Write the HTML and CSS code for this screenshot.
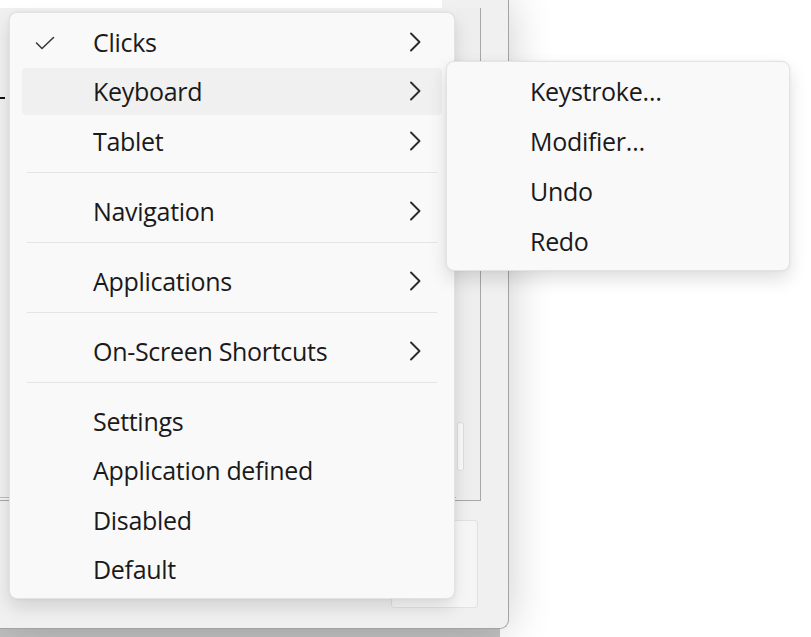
FILE: index.html
```html
<!DOCTYPE html>
<html lang="en">
<head>
<meta charset="utf-8">
<title>Context menu</title>
<link rel="stylesheet" href="styles.css">
</head>
<body>
<div class="desktop">
  <div class="app-window">
    <div class="topbar"></div>
    <div class="frame">
      <div class="tree"><div class="tick"></div></div>
      <div class="scroll"><div class="thumb"></div></div>
    </div>
    <div class="button-row"><div class="win-button"></div></div>
  </div>
  <div class="bottom-strip"></div>

  <div class="menu main-menu">
    <div class="item">
      <span class="icon-col">
        <svg class="check" width="20" height="14" viewBox="0 0 20 14"><polyline points="1.5,7 7,12.5 18.5,1.5" fill="none" stroke="#3a3a3a" stroke-width="1.6" stroke-linecap="round" stroke-linejoin="round"/></svg>
      </span>
      <span class="label">Clicks</span>
      <svg class="chev" width="12" height="20" viewBox="0 0 12 20"><polyline points="2,1.5 10.5,10 2,18.5" fill="none" stroke="#2b2b2b" stroke-width="1.9" stroke-linecap="round" stroke-linejoin="round"/></svg>
    </div>
    <div class="item active">
      <span class="icon-col"></span>
      <span class="label">Keyboard</span>
      <svg class="chev" width="12" height="20" viewBox="0 0 12 20"><polyline points="2,1.5 10.5,10 2,18.5" fill="none" stroke="#2b2b2b" stroke-width="1.9" stroke-linecap="round" stroke-linejoin="round"/></svg>
    </div>
    <div class="item">
      <span class="icon-col"></span>
      <span class="label">Tablet</span>
      <svg class="chev" width="12" height="20" viewBox="0 0 12 20"><polyline points="2,1.5 10.5,10 2,18.5" fill="none" stroke="#2b2b2b" stroke-width="1.9" stroke-linecap="round" stroke-linejoin="round"/></svg>
    </div>
    <div class="sep"></div>
    <div class="item">
      <span class="icon-col"></span>
      <span class="label">Navigation</span>
      <svg class="chev" width="12" height="20" viewBox="0 0 12 20"><polyline points="2,1.5 10.5,10 2,18.5" fill="none" stroke="#2b2b2b" stroke-width="1.9" stroke-linecap="round" stroke-linejoin="round"/></svg>
    </div>
    <div class="sep"></div>
    <div class="item">
      <span class="icon-col"></span>
      <span class="label">Applications</span>
      <svg class="chev" width="12" height="20" viewBox="0 0 12 20"><polyline points="2,1.5 10.5,10 2,18.5" fill="none" stroke="#2b2b2b" stroke-width="1.9" stroke-linecap="round" stroke-linejoin="round"/></svg>
    </div>
    <div class="sep"></div>
    <div class="item">
      <span class="icon-col"></span>
      <span class="label">On-Screen Shortcuts</span>
      <svg class="chev" width="12" height="20" viewBox="0 0 12 20"><polyline points="2,1.5 10.5,10 2,18.5" fill="none" stroke="#2b2b2b" stroke-width="1.9" stroke-linecap="round" stroke-linejoin="round"/></svg>
    </div>
    <div class="sep"></div>
    <div class="item"><span class="icon-col"></span><span class="label">Settings</span></div>
    <div class="item"><span class="icon-col"></span><span class="label">Application defined</span></div>
    <div class="item"><span class="icon-col"></span><span class="label">Disabled</span></div>
    <div class="item"><span class="icon-col"></span><span class="label">Default</span></div>
  </div>

  <div class="menu sub-menu">
    <div class="item"><span class="icon-col"></span><span class="label">Keystroke…</span></div>
    <div class="item"><span class="icon-col"></span><span class="label">Modifier…</span></div>
    <div class="item"><span class="icon-col"></span><span class="label">Undo</span></div>
    <div class="item"><span class="icon-col"></span><span class="label">Redo</span></div>
  </div>
</div>
</body>
</html>
```

FILE: styles.css
```css
* { box-sizing: border-box; }
html, body { margin: 0; padding: 0; }
body {
  width: 811px;
  height: 637px;
  overflow: hidden;
  background: #ffffff;
  font-family: "Open Sans", "Noto Sans", sans-serif;
}
.desktop {
  position: relative;
  width: 811px;
  height: 637px;
  overflow: hidden;
}

/* background application window */
.app-window {
  position: absolute;
  left: 0;
  top: 0;
  width: 509px;
  height: 629px;
  background: #f0f0f0;
  border-right: 1px solid #a3a3a3;
  border-bottom: 1px solid #a3a3a3;
  border-bottom-right-radius: 9px;
  box-shadow: 0 0 46px rgba(0, 0, 0, 0.20);
  display: flex;
  flex-direction: column;
  z-index: 2;
}
.topbar {
  width: 442px;
  height: 8px;
  background: #ffffff;
  flex: none;
}
.frame {
  width: 481px;
  height: 493px;
  border-right: 1px solid #a7a7a7;
  border-bottom: 1px solid #a7a7a7;
  display: flex;
  flex: none;
  box-shadow: inset -2px -2px 0 #f3f3f3, inset -3px -3px 0 #bdbdbd;
}
.tree {
  flex: 1;
  padding-top: 89px;
}
.tick {
  width: 5px;
  height: 2px;
  background: #111;
}
.scroll {
  width: 24px;
  display: flex;
  flex-direction: column;
  justify-content: flex-end;
  padding: 0 0 29px 1px;
  background: #eeeeee;
}
.thumb {
  width: 7px;
  height: 49px;
  background: #fbfbfb;
  border: 1px solid #dedede;
  border-radius: 3px;
}
.button-row {
  display: flex;
  justify-content: flex-end;
  padding: 19px 30px 0 0;
}
.win-button {
  width: 87px;
  height: 88px;
  background: linear-gradient(90deg, #f7f7f7, #f9f9f9 80%, #f4f4f4);
  border: 1px solid #e2e2e2;
  border-radius: 3px;
}
.bottom-strip {
  position: absolute;
  left: 0;
  bottom: 0;
  width: 500px;
  height: 10px;
  background: #c2c2c2;
  z-index: 1;
}

/* menus */
.menu {
  position: absolute;
  display: flex;
  flex-direction: column;
  background: #f9f9f9;
  border: 1px solid #e3e3e3;
  border-radius: 8px;
  padding: 4px 0;
  box-shadow: 0 8px 18px rgba(0, 0, 0, 0.13), 0 0 3px rgba(0, 0, 0, 0.06);
  z-index: 5;
}
.main-menu {
  left: 9px;
  top: 12px;
  width: 446px;
}
.sub-menu {
  left: 446px;
  top: 61px;
  width: 344px;
  z-index: 6;
}
.item {
  height: 47.5px;
  flex: none;
  margin: 1px 12px;
  border-radius: 4px;
  display: flex;
  align-items: center;
  padding-right: 21px;
  color: #1a1a1a;
  font-size: 25px;
  letter-spacing: -0.3px;
  white-space: nowrap;
}
.sub-menu .item {
  height: 48px;
}
.item.active {
  background: #f0f0f0;
}
.icon-col {
  width: 71px;
  flex: none;
  display: flex;
  align-items: center;
  padding-left: 13px;
}
.check {
  display: block;
  margin-top: 3px;
}
.label {
  flex: 1;
}
.chev {
  display: block;
  flex: none;
}
.sep {
  height: 1px;
  flex: none;
  background: #e4e4e4;
  margin: 6px 17px 13.5px;
}
```
